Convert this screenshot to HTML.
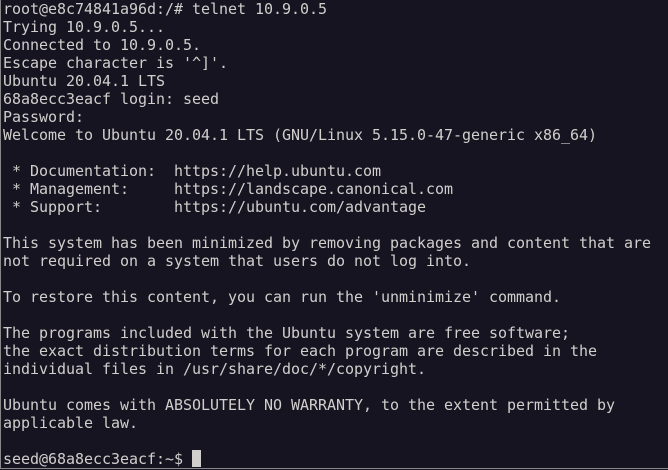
<!DOCTYPE html>
<html><head><meta charset="utf-8"><style>
html,body{margin:0;padding:0;background:#171421;}
body{width:668px;height:470px;overflow:hidden;position:relative;}
.frame{position:absolute;left:0;top:0;width:668px;height:469px;border-left:1px solid #888;border-bottom:1px solid #888;box-sizing:border-box;}
pre{position:absolute;left:3px;top:0;margin:0;font-family:"DejaVu Sans Mono","Liberation Mono",monospace;font-size:15px;letter-spacing:-0.03px;line-height:18px;color:#d0cfcc;white-space:pre;}
.cur{display:inline-block;width:9px;height:17px;background:#d0cfcc;vertical-align:-3px;}
</style></head><body><div class="frame"></div><pre>root@e8c74841a96d:/# telnet 10.9.0.5
Trying 10.9.0.5...
Connected to 10.9.0.5.
Escape character is '^]'.
Ubuntu 20.04.1 LTS
68a8ecc3eacf login: seed
Password:
Welcome to Ubuntu 20.04.1 LTS (GNU/Linux 5.15.0-47-generic x86_64)

 * Documentation:  https://help.ubuntu.com
 * Management:     https://landscape.canonical.com
 * Support:        https://ubuntu.com/advantage

This system has been minimized by removing packages and content that are
not required on a system that users do not log into.

To restore this content, you can run the 'unminimize' command.

The programs included with the Ubuntu system are free software;
the exact distribution terms for each program are described in the
individual files in /usr/share/doc/*/copyright.

Ubuntu comes with ABSOLUTELY NO WARRANTY, to the extent permitted by
applicable law.

seed@68a8ecc3eacf:~$ <span class="cur"></span></pre></body></html>
